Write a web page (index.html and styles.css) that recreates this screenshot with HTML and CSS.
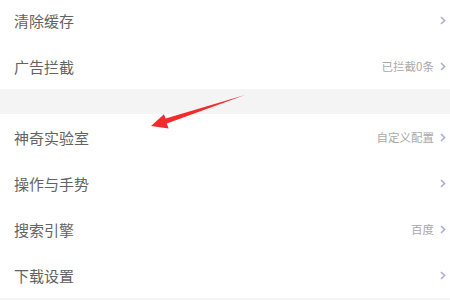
FILE: index.html
```html
<!DOCTYPE html>
<html lang="zh">
<head>
<meta charset="utf-8">
<link rel="stylesheet" href="styles.css">
</head>
<body>
<div class="page">
  <div class="group first">
    <div class="row"><span class="label">清除缓存</span><span class="right"><svg class="chev" viewBox="0 0 6 9"><polyline points="1,1 4.6,4.5 1,8"/></svg></span></div>
    <div class="row"><span class="label">广告拦截</span><span class="right"><span class="value">已拦截0条</span><svg class="chev" viewBox="0 0 6 9"><polyline points="1,1 4.6,4.5 1,8"/></svg></span></div>
  </div>
  <div class="spacer"></div>
  <div class="group">
    <div class="row"><span class="label">神奇实验室</span><span class="right"><span class="value">自定义配置</span><svg class="chev" viewBox="0 0 6 9"><polyline points="1,1 4.6,4.5 1,8"/></svg></span></div>
    <div class="row"><span class="label">操作与手势</span><span class="right"><svg class="chev" viewBox="0 0 6 9"><polyline points="1,1 4.6,4.5 1,8"/></svg></span></div>
    <div class="row"><span class="label">搜索引擎</span><span class="right"><span class="value">百度</span><svg class="chev" viewBox="0 0 6 9"><polyline points="1,1 4.6,4.5 1,8"/></svg></span></div>
    <div class="row"><span class="label">下载设置</span><span class="right"><svg class="chev" viewBox="0 0 6 9"><polyline points="1,1 4.6,4.5 1,8"/></svg></span></div>
  </div>
  <div class="footer"></div>
  <svg class="arrow" viewBox="0 0 450 300" width="450" height="300">
    <polygon points="151,126 164,114.2 165.6,118.6 245,95 166.8,123.4 168.6,128.6"/>
  </svg>
</div>
</body>
</html>
```
FILE: styles.css
```css
html, body {
  margin: 0;
  padding: 0;
  background: #ffffff;
}
.page {
  position: relative;
  width: 450px;
  height: 300px;
  overflow: hidden;
  font-family: "Noto Sans CJK SC", "Noto Sans", sans-serif;
  display: flex;
  flex-direction: column;
}
.group {
  display: flex;
  flex-direction: column;
  background: #ffffff;
}
.group.first {
  margin-top: -3px;
}
.row {
  height: 46px;
  display: flex;
  align-items: center;
  justify-content: space-between;
  padding: 0 4px 0 14px;
  flex-shrink: 0;
}
.label {
  font-size: 15px;
  color: #636363;
}
.right {
  display: flex;
  align-items: center;
  gap: 6px;
}
.value {
  font-size: 11.5px;
  color: #a9a9a9;
}
.chev {
  width: 6px;
  height: 9px;
  fill: none;
  stroke: #aeacd0;
  stroke-width: 1.6;
}
.spacer {
  height: 25px;
  background: #f4f4f4;
  flex-shrink: 0;
}
.footer {
  flex: 1;
  background: #f4f4f4;
}
.arrow {
  position: absolute;
  left: 0;
  top: 0;
  fill: #f22b2b;
}
```
